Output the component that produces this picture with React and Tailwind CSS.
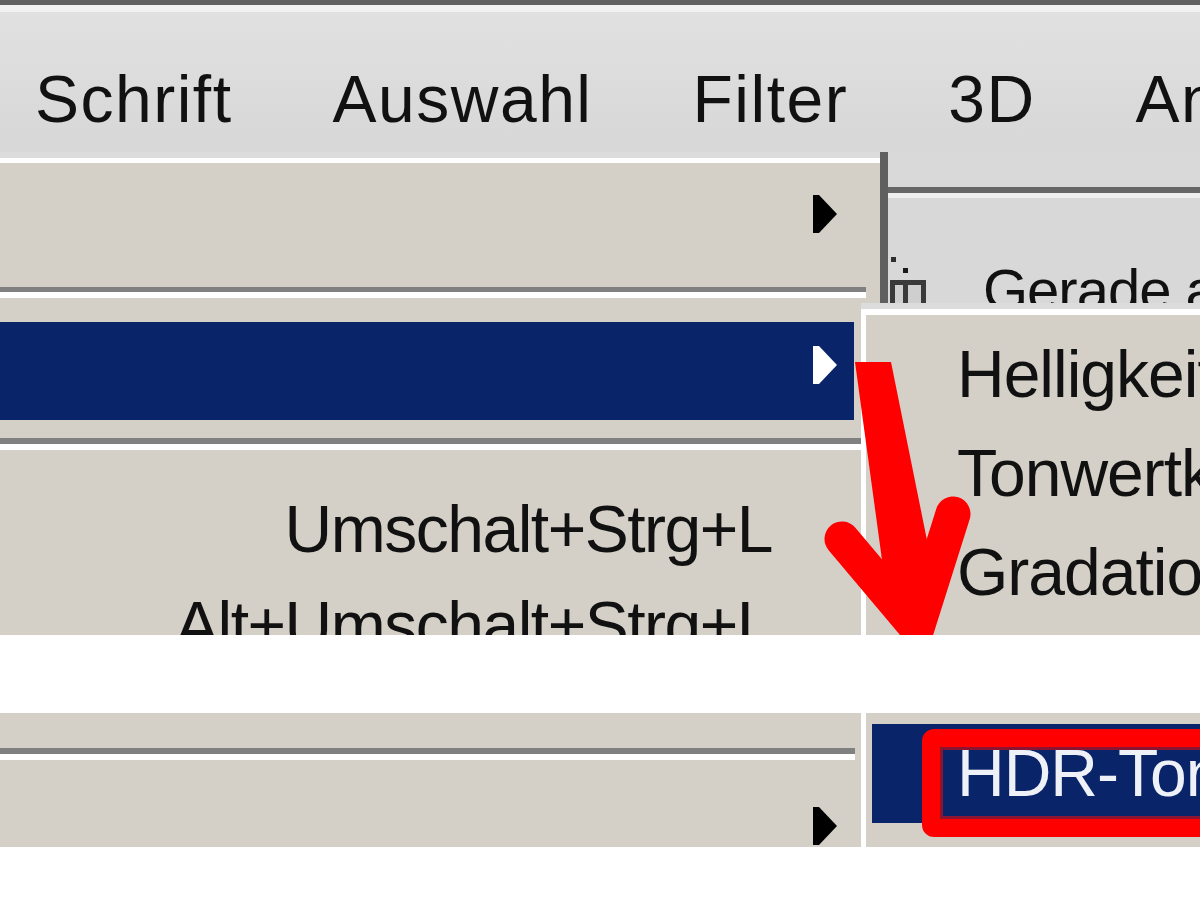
import React from "react";

function Tri({ color }) {
  return (
    <svg width="24" height="38" viewBox="0 0 24 38" className="block">
      <polygon points="0,0 6,0 24,19 6,38 0,38" fill={color} />
    </svg>
  );
}

function HandleIcon() {
  return (
    <svg width="36" height="46" viewBox="0 0 36 46" className="block">
      <rect x="0" y="23" width="36" height="23" fill="#cfcfcf" />
      <rect x="1" y="0" width="5" height="5" fill="#2d2d2d" />
      <rect x="13" y="11" width="5" height="5" fill="#1a1a1a" />
      <rect x="0" y="23" width="36" height="5" fill="#3a3a3a" />
      <rect x="0" y="23" width="5" height="23" fill="#3a3a3a" />
      <rect x="13" y="28" width="5" height="18" fill="#3a3a3a" />
      <rect x="31" y="28" width="5" height="18" fill="#3a3a3a" />
    </svg>
  );
}

export default function App() {
  return (
    <div className="w-[1200px] h-[900px] bg-white overflow-hidden relative font-['Liberation_Sans',Arial,sans-serif] text-[#111111]">
      {/* upper part of the screenshot */}
      <div className="relative h-[635px] overflow-hidden">
        <div className="h-[5px] bg-[#606060]" />
        <div className="h-[7px] bg-[#f1f1f1]" />
        <div className="h-[140px] bg-linear-to-b from-[#e1e1e1] to-[#d7d7d7] flex gap-[100px] pl-[35px] pt-[54px] text-[66px] leading-none tracking-[1.5px] whitespace-nowrap">
          <span>Schrift</span>
          <span>Auswahl</span>
          <span>Filter</span>
          <span>3D</span>
          <span>Ansicht</span>
        </div>

        <div className="flex">
          {/* main dropdown menu */}
          <div className="w-[888px] shrink-0 bg-[#d4d0c8] border-r-[8px] border-[#5f5f5f]">
            <div className="h-[6px] bg-[#dcdcdc]" />
            <div className="h-[5px] bg-white" />
            <div className="h-[124px] flex justify-end pt-[32px] pr-[43px]">
              <Tri color="#000000" />
            </div>
            <div className="h-[5px] bg-[#808080] mr-[14px]" />
            <div className="h-[6px] bg-white mr-[14px]" />
            <div className="h-[24px]" />
            <div className="h-[98px] bg-[#0a246a] mr-[26px] flex justify-end pt-[24px] pr-[17px]">
              <Tri color="#ffffff" />
            </div>
            <div className="h-[18px]" />
            <div className="h-[6px] bg-[#808080] mr-[14px]" />
            <div className="h-[6px] bg-white mr-[14px]" />
            <div className="pt-[31px] pr-[108px] text-right text-[66px] leading-[96px] tracking-[-1.5px] whitespace-nowrap">
              <div>Umschalt+Strg+L</div>
              <div>Alt+Umschalt+Strg+L</div>
            </div>
          </div>

          {/* options bar behind the menu */}
          <div className="flex-1 h-[151px] overflow-hidden bg-[#d8d8d8]">
            <div className="h-[35px] bg-[#d9d9d9]" />
            <div className="h-[6px] bg-[#666666]" />
            <div className="h-[5px] bg-[#eeeeee]" />
            <div className="flex items-start">
              <div className="ml-[2px] mt-[59px]">
                <HandleIcon />
              </div>
              <div className="ml-[57px] mt-[63px] text-[58px] leading-none tracking-[-1px] whitespace-nowrap">
                Gerade ausrichten
              </div>
            </div>
          </div>
        </div>

        {/* submenu */}
        <div className="absolute left-[861px] top-[303px] w-[339px] h-[340px]">
          <div className="h-[6px] bg-[#dcdcdc]" />
          <div className="h-full border-l-[5px] border-t-[6px] border-white bg-[#d4d0c8] pl-[91px] pt-[10px] text-[66px] leading-[99px] tracking-[-1px] whitespace-nowrap">
            <div>Helligkeit/Kontrast...</div>
            <div>Tonwertkorrektur...</div>
            <div>Gradationskurven...</div>
            <div>Belichtung...</div>
          </div>
        </div>

        {/* red annotation arrow */}
        <svg
          className="absolute left-0 top-0 pointer-events-none"
          width="1200"
          height="635"
          viewBox="0 0 1200 635"
        >
          <polygon points="855,362 891,362 931,560 917,630 882,560" fill="#ff0000" />
          <polyline
            points="842,539 917,628 953,514"
            fill="none"
            stroke="#ff0000"
            strokeWidth="35"
            strokeLinecap="round"
            strokeLinejoin="round"
          />
        </svg>
      </div>

      {/* white gap */}
      <div className="h-[78px] bg-white" />

      {/* lower part of the screenshot */}
      <div className="relative h-[134px] flex">
        <div className="w-[861px] shrink-0 bg-[#d4d0c8]">
          <div className="h-[35px]" />
          <div className="h-[6px] bg-[#808080] mr-[6px]" />
          <div className="h-[6px] bg-white mr-[6px]" />
          <div className="flex justify-end pt-[47px] pr-[24px]">
            <Tri color="#000000" />
          </div>
        </div>
        <div className="flex-1 border-l-[5px] border-white bg-[#d4d0c8] pt-[11px] pl-[6px]">
          <div className="h-[99px] bg-[#0a246a] text-[#eef2f8] pl-[85px] text-[66px] leading-[99px] tracking-[-1px] whitespace-nowrap overflow-hidden">
            HDR-Tonung...
          </div>
        </div>
        <div className="absolute left-[922px] top-[16px] w-[320px] h-[108px] border-[18px] border-[#ff0000] rounded-[12px] shadow-[inset_0_0_0_3px_#8a1432] pointer-events-none" />
      </div>
    </div>
  );
}
